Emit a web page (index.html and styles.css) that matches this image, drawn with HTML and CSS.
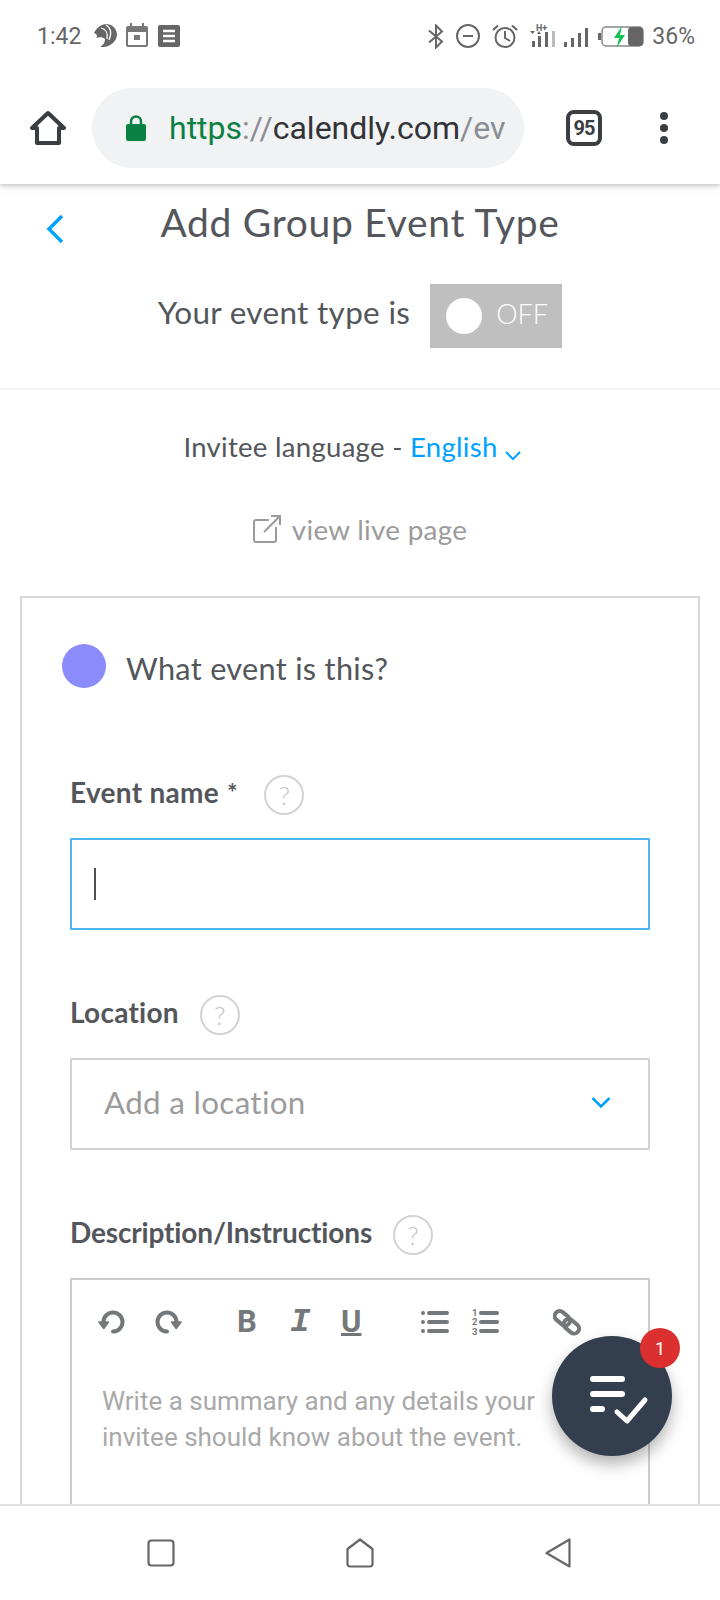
FILE: index.html
```html
<!DOCTYPE html>
<html lang="en">
<head>
<meta charset="utf-8">
<title>Add Group Event Type</title>
<link rel="stylesheet" href="styles.css">
</head>
<body>
<div class="screen">
  <div class="status">
    <div class="status-left">
      <span class="time">1:42</span>
      <svg class="ic-bird" width="24" height="24" viewBox="0 0 24 24"><path fill="#666" d="M1 9C4 3 9 0 14 0c6 1 10 5 10 11-1 7-6 11-13 12H7c3-2 5-4 5-8-2-2-6-2-9-1 2-2 1-4-2-5z"/><path fill="none" stroke="#fff" stroke-width="1.200" d="M8 4c5 1 7 5 6 11M13 1c5 3 6 8 3 15"/></svg>
      <svg class="ic-cal" width="22" height="24" viewBox="0 0 22 24"><path fill="none" stroke="#777" stroke-width="2" d="M2 4h18a1 1 0 0 1 1 1v17a1 1 0 0 1-1 1H2a1 1 0 0 1-1-1V5a1 1 0 0 1 1-1z"/><path fill="#777" d="M1 4h20v5H1zM4 0h2v4H4zM16 0h2v4h-2zM8 12h6v5H8z"/></svg>
      <svg class="ic-note" width="22" height="22" viewBox="0 0 22 22"><rect width="22" height="22" rx="2" fill="#666"/><path stroke="#fff" stroke-width="2.400" d="M5 6h12M5 11h12M5 16h12"/></svg>
    </div>
    <div class="status-right">
      <svg class="ic-bt" width="16" height="25" viewBox="0 0 16 25"><path fill="none" stroke="#666" stroke-width="2" d="M1 6.500 14 17.500 8 23.500V1.500l6 6-13 11"/></svg>
      <svg class="ic-dnd" width="24" height="24" viewBox="0 0 24 24"><circle cx="12" cy="12" r="11" fill="none" stroke="#666" stroke-width="2"/><path stroke="#666" stroke-width="2" d="M7 12h10"/></svg>
      <svg class="ic-alarm" width="26" height="24" viewBox="0 0 26 24"><circle cx="13" cy="13.500" r="9.500" fill="none" stroke="#666" stroke-width="2"/><path fill="none" stroke="#666" stroke-width="2" d="M13 7v7l5 3M1 6l5-4.500M25 6l-5-4.500"/></svg>
      <svg class="ic-sig1" width="26" height="23" viewBox="0 0 26 23"><text x="6" y="7" class="hplus">H+</text><path fill="#666" d="M2 17h3v6H2zM8 12h3v11H8zM15 8h3v15h-3z"/><path fill="#bbb" d="M22 7h3v16h-3z"/><path fill="#666" d="M0 7h5l-2.500 3zM7 10l2-3 2 3z"/></svg>
      <svg class="ic-sig2" width="24" height="19" viewBox="0 0 24 19"><path fill="#666" d="M0 14h3v5H0zM7 10h3v9H7zM14 5h3v14h-3zM21 0h3v19h-3z"/></svg>
      <svg class="ic-bat" width="46" height="21" viewBox="0 0 46 21"><path fill="#666" d="M0 7h3v7H0z"/><rect x="4" y="1" width="41" height="19" rx="4" fill="none" stroke="#888" stroke-width="1.500"/><rect x="30" y="1" width="15" height="19" rx="3.500" fill="#666"/><path fill="#0ec254" d="M24 0l-8 12h5l-2 9 8-12h-5z"/></svg>
      <span class="pct">36%</span>
    </div>
  </div>

  <div class="toolbar">
    <svg class="ic-home" width="36" height="36" viewBox="0 0 36 36"><path fill="none" stroke="#3a3d42" stroke-width="4" stroke-linejoin="round" d="M2 18 18 3l16 15h-5v15H7V18z"/></svg>
    <div class="omnibox">
      <svg class="ic-lock" width="20" height="26" viewBox="0 0 20 26"><path fill="#0b8043" d="M2 9h16a2 2 0 0 1 2 2v13a2 2 0 0 1-2 2H2a2 2 0 0 1-2-2V11a2 2 0 0 1 2-2z"/><path fill="none" stroke="#0b8043" stroke-width="2.500" d="M5 10V6.500a5 5 0 0 1 10 0V10"/></svg>
      <div class="url"><span class="u-green">https</span><span class="u-grey">://</span><span class="u-dark">calendly.com</span><span class="u-grey">/ev</span></div>
    </div>
    <div class="tabs">95</div>
    <div class="dots"><i></i><i></i><i></i></div>
  </div>

  <main class="page">
    <header class="head">
      <div class="head-title">
        <svg class="ic-back" width="18" height="30" viewBox="0 0 18 30"><path fill="none" stroke="#00a2ff" stroke-width="3.500" d="M16 2 3 15l13 13"/></svg>
        <h1 class="title">Add Group Event Type</h1>
        <span></span>
      </div>
      <div class="state">
        <span class="state-text">Your event type is</span>
        <div class="toggle"><i class="knob"></i><span class="off">OFF</span></div>
      </div>
    </header>

    <div class="lang">Invitee language - <a class="lang-link">English</a><svg class="ic-chev-small" width="16" height="11" viewBox="0 0 16 11"><path fill="none" stroke="#00a2ff" stroke-width="2" d="M1 2l7 7 7-7"/></svg></div>
    <div class="live">
      <svg width="28" height="28" viewBox="0 0 28 28"><path fill="none" stroke="#9b9b9b" stroke-width="2" d="M16 5H3a2 2 0 0 0-2 2v18a2 2 0 0 0 2 2h18a2 2 0 0 0 2-2V12M11 17 27 1M18 1h9v9"/></svg>
      <span>view live page</span>
    </div>

    <section class="card">
      <div class="card-head"><i class="dot"></i><span class="card-title">What event is this?</span></div>

      <div class="label-row lbl-name"><label class="label">Event name</label><span class="req">*</span><span class="help">?</span></div>
      <div class="input focus"><i class="caret"></i></div>

      <div class="label-row lbl-loc"><label class="label">Location</label><span class="help">?</span></div>
      <div class="input select"><span class="ph">Add a location</span><svg class="ic-select" width="20" height="13" viewBox="0 0 20 13"><path fill="none" stroke="#00a2ff" stroke-width="2.500" d="M1.500 2 10 10.500 18.500 2"/></svg></div>

      <div class="label-row lbl-desc"><label class="label">Description/Instructions</label><span class="help">?</span></div>
      <div class="editor">
        <div class="tools">
          <div class="tool-group g-hist">
            <svg width="28" height="24" viewBox="0 0 28 24"><path fill="none" stroke="#75787b" stroke-width="4" stroke-linecap="round" d="M5.500 12A9.500 9.500 0 1 1 15 21.500"/><path fill="#75787b" stroke="#75787b" stroke-width="1.500" stroke-linejoin="round" d="M1 12h9.500l-4.750 6.500z"/></svg>
            <svg width="28" height="24" viewBox="0 0 28 24"><path fill="none" stroke="#75787b" stroke-width="4" stroke-linecap="round" d="M22.500 12A9.500 9.500 0 1 0 13 21.500"/><path fill="#75787b" stroke="#75787b" stroke-width="1.500" stroke-linejoin="round" d="M27 12h-9.500l4.750 6.500z"/></svg>
          </div>
          <div class="tool-group g-fmt">
            <span class="t-b">B</span><span class="t-i">I</span><span class="t-u">U</span>
          </div>
          <div class="tool-group g-list">
            <svg width="28" height="24" viewBox="0 0 28 24"><path stroke="#75787b" stroke-width="4" stroke-linecap="round" d="M8 3h18M8 12h18M8 21h18"/><circle cx="2" cy="3" r="2" fill="#75787b"/><circle cx="2" cy="12" r="2" fill="#75787b"/><circle cx="2" cy="21" r="2" fill="#75787b"/></svg>
            <div class="num-list"><div class="nums"><span>1</span><span>2</span><span>3</span></div><div class="num-bars"><i></i><i></i><i></i></div></div>
          </div>
          <svg class="ic-link" width="28" height="28" viewBox="0 0 28 28"><g fill="none" stroke="#75787b" stroke-width="4"><rect x="1" y="5" width="17" height="10" rx="5" transform="rotate(40 9 10)"/><rect x="10" y="13" width="17" height="10" rx="5" transform="rotate(40 18 18)"/></g></svg>
        </div>
        <p class="ph-text">Write a summary and any details your invitee should know about the event.</p>
      </div>
    </section>
  </main>

  <nav class="nav">
    <svg width="28" height="28" viewBox="0 0 28 28"><rect x="1.500" y="1.500" width="25" height="25" rx="3" fill="none" stroke="#666" stroke-width="2.200"/></svg>
    <svg width="28" height="30" viewBox="0 0 28 30"><path fill="none" stroke="#666" stroke-width="2.200" stroke-linejoin="round" d="M14 1.500 26.500 11v15a2.500 2.500 0 0 1-2.500 2.500H4A2.500 2.500 0 0 1 1.500 26V11z"/></svg>
    <svg width="26" height="30" viewBox="0 0 26 30"><path fill="none" stroke="#666" stroke-width="2.200" stroke-linejoin="round" d="M24.500 1.500v27L1.500 15z"/></svg>
  </nav>

  <div class="fab">
    <span class="badge">1</span>
    <svg width="60" height="50" viewBox="0 0 60 50"><path stroke="#fff" stroke-width="6" stroke-linecap="round" d="M4 3h29M4 18h29M4 33h9"/><path fill="none" stroke="#fff" stroke-width="5" stroke-linecap="round" stroke-linejoin="round" d="M28 36l10 9 18-21"/></svg>
  </div>
</div>
</body>
</html>
```

FILE: styles.css
```css
* { box-sizing: border-box; }
html, body { margin: 0; padding: 0; background: #fff; }
.screen { position: relative; width: 720px; height: 1600px; overflow: hidden; display: flex; flex-direction: column; font-family: "Lato", "Open Sans", sans-serif; color: #53565b; }

.status { height: 72px; flex: none; display: flex; align-items: center; justify-content: space-between; padding: 0 25px 0 37px; font-family: "Roboto", sans-serif; font-size: 23px; color: #666; }
.status-left, .status-right { display: flex; align-items: center; }
.time { width: 44px; }
.ic-bird { margin-left: 12px; }
.ic-cal { margin-left: 9px; margin-top: -2px; }
.ic-note { margin-left: 10px; }
.ic-dnd { margin-left: 12px; }
.ic-alarm { margin-left: 12px; }
.ic-sig1 { margin-left: 12px; margin-top: -2px; }
.ic-sig2 { margin-left: 8px; margin-top: 2px; }
.ic-bat { margin-left: 10px; }
.pct { margin-left: 8px; }
.hplus { font-family: "Roboto", sans-serif; font-size: 9px; font-weight: 700; fill: #666; }

.toolbar { height: 112px; flex: none; display: flex; align-items: center; padding: 0 0 0 30px; position: relative; z-index: 2; box-shadow: 0 2px 4px rgba(0,0,0,.18), 0 6px 10px rgba(0,0,0,.04); clip-path: inset(0 0 -24px 0); background: #fff; }
.omnibox { width: 432px; height: 80px; margin-left: 26px; padding-left: 34px; border-radius: 40px; background: #f1f2f4; display: flex; align-items: center; overflow: hidden; }
.url { margin-left: 23px; font-family: "Roboto", sans-serif; font-size: 32px; white-space: nowrap; }
.u-green { color: #0b8043; }
.u-grey { color: #8a8d91; }
.u-dark { color: #323336; }
.tabs { width: 36px; height: 36px; margin-left: 42px; border: 4px solid #3a3d42; border-radius: 8px; display: flex; align-items: center; justify-content: center; font-family: "Roboto", sans-serif; font-weight: 700; font-size: 20px; letter-spacing: -1px; color: #3a3d42; }
.dots { display: flex; flex-direction: column; gap: 4px; margin-left: 58px; }
.dots i { width: 8px; height: 8px; border-radius: 50%; background: #3a3d42; }

.page { flex: 1; min-height: 0; overflow: hidden; }
.head { padding-top: 16px; padding-bottom: 40px; border-bottom: 2px solid #f0f4f8; }
.head-title { display: grid; grid-template-columns: 1fr auto 1fr; align-items: center; height: 44px; }
.ic-back { margin-left: 46px; margin-top: 14px; }
.title { margin: 0; font-size: 39px; font-weight: 400; line-height: 44px; letter-spacing: .7px; color: #53565b; }
.state { display: flex; justify-content: center; align-items: center; gap: 20px; margin-top: 40px; }
.state-text { font-size: 31.500px; letter-spacing: .3px; margin-bottom: 8px; }
.toggle { width: 132px; height: 64px; background: #bfbfbf; display: flex; align-items: center; padding-left: 16px; color: #fff; }
.knob { width: 36px; height: 36px; border-radius: 50%; background: #fff; }
.off { margin-left: 14px; margin-bottom: 6px; font-size: 27px; font-weight: 300; }

.lang { height: 40px; line-height: 40px; margin-top: 37px; padding-right: 16px; text-align: center; font-size: 27.500px; letter-spacing: .3px; }
.lang-link { color: #00a2ff; }
.ic-chev-small { margin-left: 7px; vertical-align: -4px; }
.live { height: 40px; margin-top: 42px; display: flex; align-items: center; justify-content: center; gap: 11px; font-size: 27.800px; letter-spacing: .3px; color: #9b9b9b; }

.card { margin: 47px 20px 0; padding: 46px 48px 0; border: 2px solid #d8d8d8; }
.card-head { display: flex; align-items: center; gap: 20px; margin-left: -8px; height: 44px; }
.dot { width: 44px; height: 44px; border-radius: 50%; background: #8b8bfb; }
.card-title { font-size: 30.700px; letter-spacing: .3px; margin-top: 4px; }

.label-row { display: flex; align-items: center; height: 40px; margin-top: 65px; }
.lbl-name { margin-top: 87px; }
.label { font-weight: 700; font-size: 28px; margin-bottom: 6px; }
.lbl-name .label { letter-spacing: .3px; }
.lbl-loc .label { letter-spacing: .25px; }
.lbl-desc .label { letter-spacing: -.15px; }
.req { margin-left: 8px; font-size: 24px; font-weight: 700; margin-bottom: 6px; }
.help { width: 40px; height: 40px; margin-left: 21px; border: 2px solid #d3d3d3; border-radius: 50%; display: flex; align-items: center; justify-content: center; font-size: 26px; font-weight: 300; color: #c4c4c4; }
.lbl-name .help { margin-left: 27px; }

.input { height: 92px; margin-top: 23px; border: 2px solid #d3d3d3; display: flex; align-items: center; }
.focus { border-color: #4db5f5; padding-left: 22px; }
.caret { width: 2px; height: 32px; background: #4d5055; }
.select { justify-content: space-between; padding: 0 37px 0 32px; }
.ph { font-size: 31.400px; letter-spacing: .3px; color: #9b9b9b; margin-bottom: 4px; }
.ic-select { margin-bottom: 4px; }

.editor { margin-top: 23px; height: 400px; border: 2px solid #ccc; padding: 30px 0 0 26px; }
.tools { display: flex; align-items: center; gap: 55px; height: 24px; }
.tool-group { display: flex; align-items: center; }
.g-hist { gap: 28px; }
.g-fmt { gap: 31px; margin-right: 2px; font-family: "Roboto", sans-serif; font-weight: 700; font-size: 31px; color: #75787b; line-height: 24px; }
.t-b { width: 22px; }
.t-i { width: 20px; font-family: "Liberation Mono", monospace; font-size: 34px; font-style: italic; text-align: center; }
.t-u { width: 23px; text-decoration: underline; text-underline-offset: 1px; }
.g-list { gap: 23px; }
.num-list { display: flex; gap: 2px; align-items: center; }
.nums { display: flex; flex-direction: column; font-family: "Roboto", sans-serif; font-weight: 700; font-size: 9.500px; line-height: 9.500px; color: #75787b; }
.num-bars { display: flex; flex-direction: column; gap: 5px; }
.num-bars i { display: block; width: 20px; height: 4px; border-radius: 2px; background: #75787b; }
.ic-link { margin-left: -1px; }
.ph-text { margin: 49px 0 0 4px; width: 450px; font-family: "Roboto", sans-serif; font-size: 26px; line-height: 36px; color: #a9a9a9; }

.nav { height: 96px; flex: none; position: relative; border-top: 2px solid #e0e0e0; display: flex; align-items: center; background: #fff; padding: 0 149px 0 147px; justify-content: space-between; }

.fab { position: absolute; left: 552px; top: 1336px; width: 120px; height: 120px; border-radius: 50%; background: #333f4f; box-shadow: 0 8px 16px rgba(0,0,0,.3); display: flex; align-items: center; justify-content: center; padding-left: 14px; padding-top: 10px; }
.badge { position: absolute; right: -8px; top: -8px; width: 40px; height: 40px; border-radius: 50%; background: #dc2f2f; color: #fff; font-family: "Roboto", sans-serif; font-size: 18px; display: flex; align-items: center; justify-content: center; }
```
